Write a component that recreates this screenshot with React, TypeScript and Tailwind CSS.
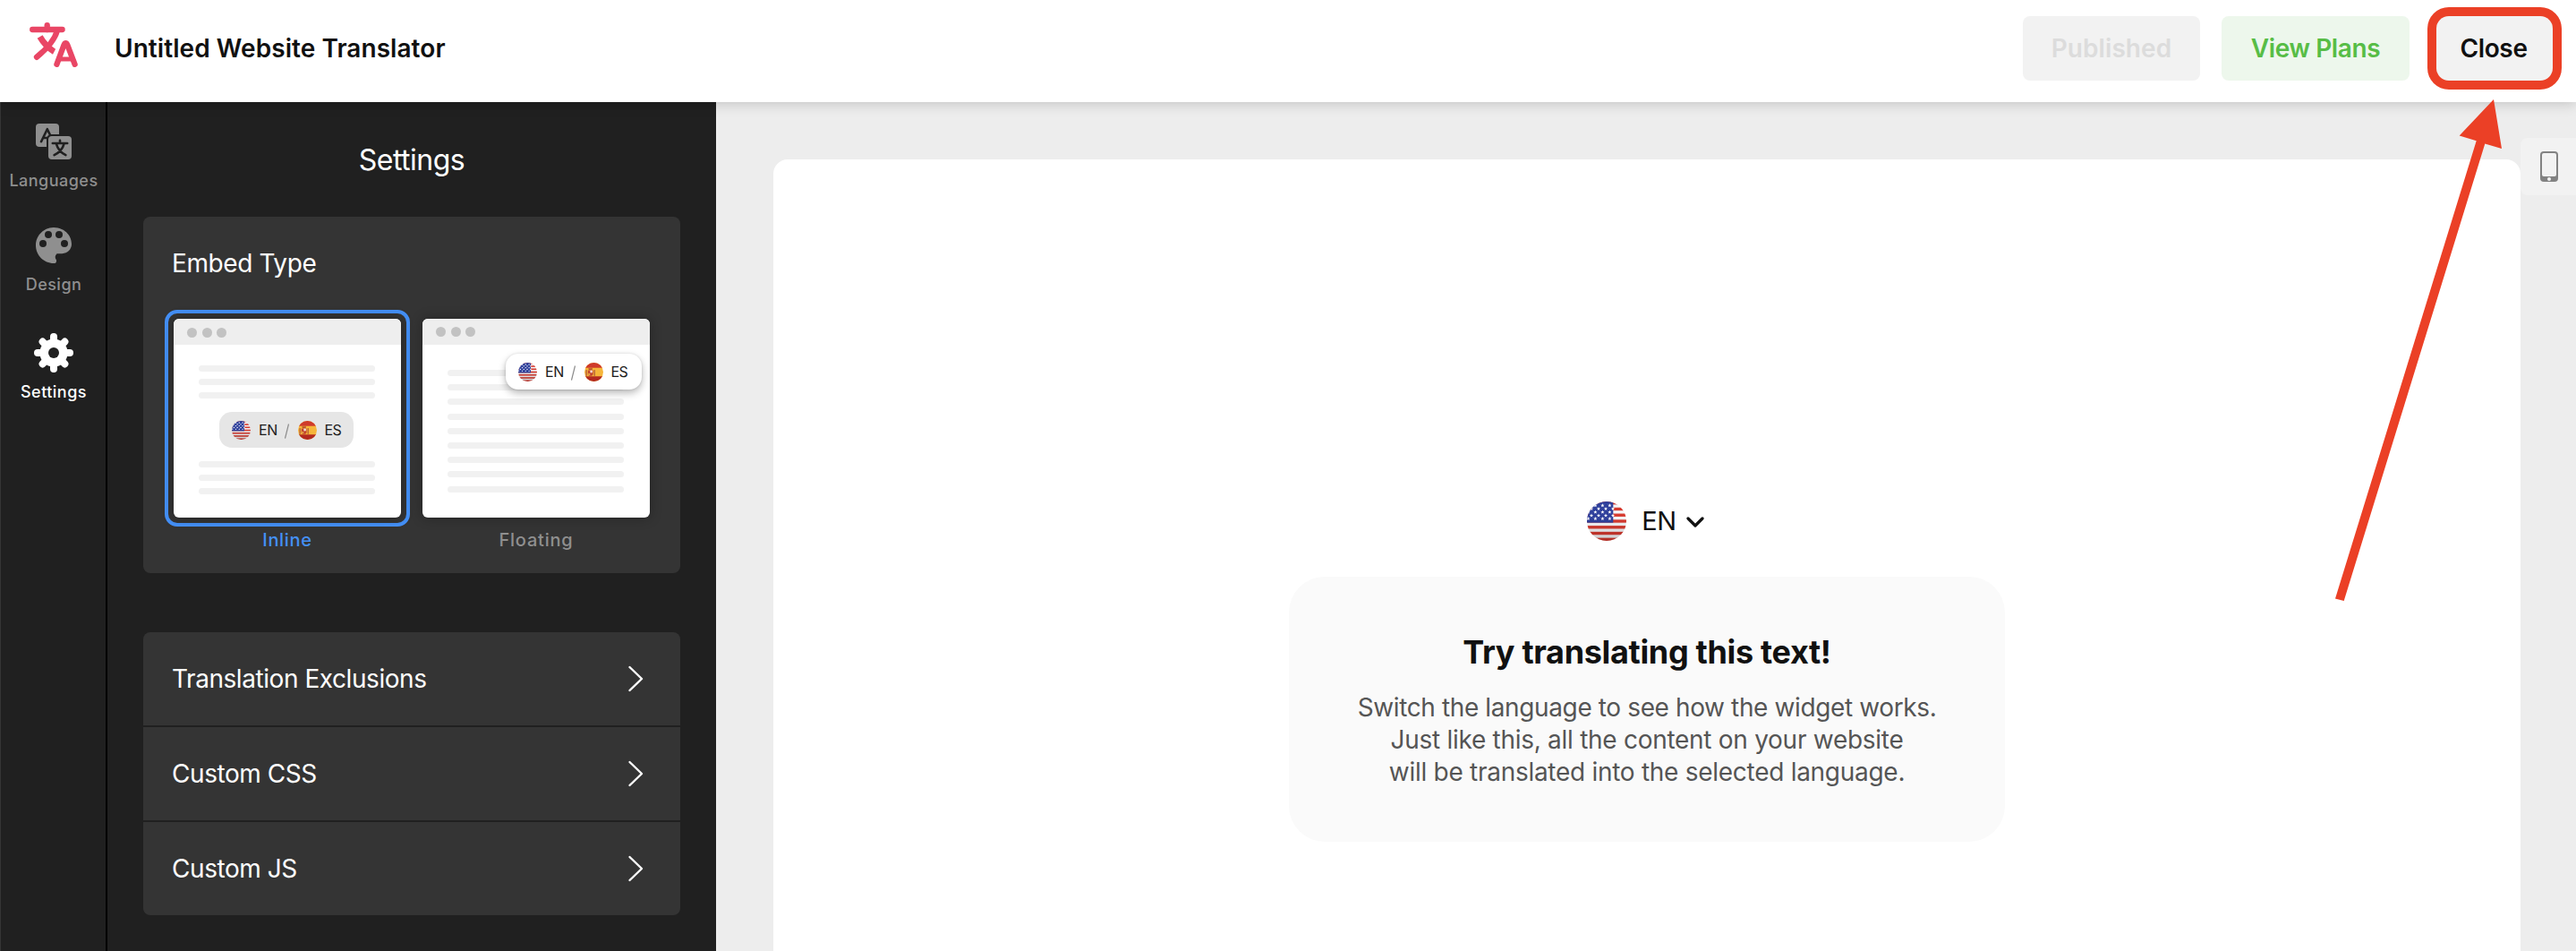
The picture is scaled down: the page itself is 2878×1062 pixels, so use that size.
import type { ReactNode } from "react";

function LogoIcon() {
  return (
    <svg width="54" height="50" viewBox="0 0 54 50" fill="none" stroke="#e94665" strokeWidth="6.3" strokeLinecap="round" strokeLinejoin="round">
      <path d="M3.2 8H36.6" />
      <path d="M19.7 3.2V8" />
      <path d="M31 9C28 20 20 29 8 38.8" />
      <path d="M11.6 16C15 22 20 28 28.5 33.5" strokeLinecap="butt" strokeWidth="6.8" />
      <path d="M33 22.5L24.5 38.5L30 40L37 27Z" fill="white" stroke="none" />
      <path d="M30.4 46.8L38.6 24.9Q40.4 21.6 42.2 24.9L50.6 46.8" />
      <path d="M34 41H48" strokeWidth="5" strokeLinecap="butt" />
    </svg>
  );
}

function LanguagesIcon() {
  return (
    <svg width="40" height="40" viewBox="0 0 40 40" fill="none" strokeLinecap="round" strokeLinejoin="round">
      <rect width="26" height="26" rx="4" fill="#8f8f8f" />
      <path d="M6 20.2L12.8 6.2L18.6 18M9 16H17" stroke="#202020" strokeWidth="2.6" />
      <rect x="12" y="12" width="30" height="30" rx="5.5" fill="#202020" />
      <rect x="14" y="14" width="26" height="26" rx="4" fill="#8f8f8f" />
      <path d="M27 18.8V22M18.8 22H35.2M31.6 22.4C30 28.5 26 32.5 20.6 35.2M22.8 22.4C24.5 28.5 28 32.5 33.4 35.2" stroke="#202020" strokeWidth="2.6" />
    </svg>
  );
}

function PaletteIcon() {
  return (
    <svg width="40" height="40" viewBox="0 0 40 40" fill="#8f8f8f">
      <path d="M20 0C9 0 0 9 0 20S9 40 20 40H21.4C22.8 39.4 23.4 37.6 22.9 36.2C21.2 34 21.2 31.2 23.6 29.2H29.5C35.4 29 40 24.5 40 18.6C40 8 31 0 20 0Z" />
      <g fill="#202020">
        <circle cx="8" cy="18" r="4" />
        <circle cx="14" cy="8" r="4" />
        <circle cx="26" cy="8" r="4" />
        <circle cx="32" cy="18" r="4" />
      </g>
    </svg>
  );
}

function GearIcon() {
  return (
    <svg width="44" height="44" viewBox="0 0 44 44">
      <circle cx="22" cy="22" r="15.6" fill="white" />
      <g stroke="white" strokeWidth="8" strokeLinecap="round">
        <path d="M22 4V40" />
        <path d="M4 22H40" />
        <path d="M9.6 9.6L34.4 34.4" />
        <path d="M34.4 9.6L9.6 34.4" />
      </g>
      <circle cx="22" cy="22" r="6" fill="#202020" />
    </svg>
  );
}

function PhoneIcon() {
  return (
    <svg width="20" height="34" viewBox="0 0 20 34">
      <rect width="20" height="34" rx="4" fill="#828282" />
      <rect x="2" y="2" width="16" height="26" rx="2" fill="#f2f2f2" />
      <circle cx="10" cy="31" r="2" fill="#f2f2f2" />
    </svg>
  );
}

const starRows = [4.5, 8.2, 11.9, 15.6, 19.3];

function UsFlag({ size, id }: { size: number; id: string }) {
  return (
    <svg width={size} height={size} viewBox="0 0 44 44" className="shrink-0">
      <defs>
        <clipPath id={id}>
          <circle cx="22" cy="22" r="22" />
        </clipPath>
        <linearGradient id={`${id}-shade`} x1="0" y1="0" x2="0" y2="1">
          <stop offset="0.4" stopColor="black" stopOpacity="0" />
          <stop offset="1" stopColor="black" stopOpacity="0.17" />
        </linearGradient>
      </defs>
      <g clipPath={`url(#${id})`}>
        <rect width="44" height="44" fill="#f5f5f7" />
        {[0, 2, 4, 6, 8, 10, 12].map((n) => (
          <rect key={n} y={n * 3.385} width="44" height="3.385" fill="#d63a2f" />
        ))}
        <rect width="29.3" height="23.7" fill="#2f409c" />
        {starRows.map((y, row) =>
          [0, 1, 2, 3].map((col) => (
            <path
              key={`${row}-${col}`}
              transform={`translate(${(row % 2 ? 5 : 1.4) + col * 8} ${y})`}
              d="M0 -2.2L0.6 -0.7L2.1 -0.7L0.9 0.3L1.3 1.8L0 0.9L-1.3 1.8L-0.9 0.3L-2.1 -0.7L-0.6 -0.7Z"
              fill="white"
            />
          ))
        )}
        <rect width="44" height="44" fill={`url(#${id}-shade)`} />
      </g>
    </svg>
  );
}

function EsFlag({ size, id }: { size: number; id: string }) {
  return (
    <svg width={size} height={size} viewBox="0 0 44 44" className="ml-[10px] shrink-0">
      <defs>
        <clipPath id={id}>
          <circle cx="22" cy="22" r="22" />
        </clipPath>
      </defs>
      <g clipPath={`url(#${id})`}>
        <rect width="44" height="44" fill="#f6b63a" />
        <rect width="44" height="12" fill="#cf3a2b" />
        <rect y="32" width="44" height="12" fill="#b32a20" />
        <rect x="3" y="17" width="3" height="14" fill="#b9653a" />
        <rect x="22" y="17" width="3" height="14" fill="#b9653a" />
        <path d="M8 18H20V26Q20 31 14 31T8 26Z" fill="#c2452f" />
        <path d="M9 13H19L18 17H10Z" fill="#b5532a" />
        <circle cx="16" cy="21" r="3" fill="#f3dcd8" />
        <rect x="9" y="25" width="4" height="4" fill="#e9b04a" />
      </g>
    </svg>
  );
}

function SidebarItem({ icon, label, active }: { icon: ReactNode; label: string; active?: boolean }) {
  return (
    <div className="flex flex-col items-center">
      <div className="flex h-11 items-center">{icon}</div>
      <span className={`mt-[10px] text-[18px] leading-6 font-medium tracking-[0.48px] ${active ? "text-white" : "text-[#8f8f8f]"}`}>
        {label}
      </span>
    </div>
  );
}

function LanguagePair({ id }: { id: string }) {
  return (
    <>
      <UsFlag size={21} id={`${id}-us`} />
      <span className="ml-[9px] w-5 text-[16px] tracking-[-0.4px]">EN</span>
      <svg width="5" height="17" viewBox="0 0 5 17" className="mt-[3px] ml-[9px] shrink-0">
        <path d="M4.5 0.5L0.5 16.5" stroke="#8a8a8a" strokeWidth="1.2" />
      </svg>
      <EsFlag size={21} id={`${id}-es`} />
      <span className="ml-[8.5px] text-[16px] tracking-[-0.6px]">ES</span>
    </>
  );
}

function Dots() {
  return (
    <>
      {[0, 1, 2].map((n) => (
        <span key={n} className="size-[11px] rounded-full bg-[#c2c2c2]" />
      ))}
    </>
  );
}

function Lines({ count }: { count: number }) {
  return (
    <>
      {Array.from({ length: count }, (_, n) => (
        <span key={n} className="block h-[7px] w-[197px] rounded-full bg-[#f1f1f1]" />
      ))}
    </>
  );
}

function InlinePreview() {
  return (
    <div className="h-[222px] w-[254px] overflow-hidden rounded-md bg-white shadow-[0_0_14px_rgba(0,0,0,0.3)]">
      <div className="flex h-[29px] items-center gap-[5.5px] bg-[#eeeeee] pt-[2px] pl-[15px]">
        <Dots />
      </div>
      <div className="flex flex-col gap-2 pt-[23px] pl-7">
        <Lines count={3} />
      </div>
      <div className="mt-[15px] ml-[51px] flex h-10 w-[150px] items-center rounded-[14px] bg-[#e6e6e6] pl-[14px] text-[#1c1c1c]">
        <LanguagePair id="inline" />
      </div>
      <div className="flex flex-col gap-2 pt-[15px] pl-7">
        <Lines count={3} />
      </div>
    </div>
  );
}

function FloatingPreview() {
  return (
    <div className="relative h-[222px] w-[254px] overflow-hidden rounded-md bg-white shadow-[0_0_14px_rgba(0,0,0,0.3)]">
      <div className="flex h-[29px] items-center gap-[5.5px] bg-[#eeeeee] pl-[15px]">
        <Dots />
      </div>
      <div className="flex flex-col gap-[9.2px] pt-[28px] pl-7">
        <Lines count={9} />
      </div>
      <div className="absolute top-[39px] right-[9px] flex h-10 w-[152px] items-center rounded-[14px] bg-white pl-[14px] text-[#1c1c1c] shadow-[0_4px_8px_rgba(0,0,0,0.28),0_0_3px_rgba(0,0,0,0.12)]">
        <LanguagePair id="floating" />
      </div>
    </div>
  );
}

const links = [
  { label: "Translation Exclusions", className: "rounded-t-lg" },
  { label: "Custom CSS", className: "" },
  { label: "Custom JS", className: "rounded-b-lg" },
];

function Header() {
  return (
    <header className="relative z-10 flex h-[114px] shrink-0 items-center justify-between bg-white pr-[26px] pb-1.5 pl-[33px] text-[28px] font-semibold shadow-[0_2px_14px_rgba(0,0,0,0.18)]">
      <div className="flex items-center">
        <div className="-mt-2">
          <LogoIcon />
        </div>
        <h1 className="ml-[41px] tracking-[0.06px] text-[#111111]">Untitled Website Translator</h1>
      </div>
      <div className="flex items-center">
        <button className="h-[72px] w-[198px] rounded-lg bg-[#f2f2f2] tracking-[0.07px] text-[#dcdcdc]">Published</button>
        <button className="ml-6 h-[72px] w-[210px] rounded-lg bg-[#edf7ec] tracking-[-0.39px] text-[#57bd46]">View Plans</button>
        <button className="ml-[30px] h-[72px] w-[130px] rounded-[14px] bg-[#f2f2f2] pr-[2px] tracking-[-0.35px] text-[#111111] shadow-[0_0_0_10px_#eb4026]">
          Close
        </button>
      </div>
    </header>
  );
}

export default function App() {
  return (
    <div className="relative flex h-[1062px] w-[2878px] flex-col overflow-hidden bg-[#ededed] font-['Inter',sans-serif]">
      <Header />

      <div className="flex min-h-0 flex-1">
        {/* Navigation */}
        <nav className="flex w-[120px] shrink-0 flex-col items-center border-r-2 border-l border-r-black border-l-[#353535] bg-[#202020] pt-[22px] pl-px">
          <SidebarItem icon={<LanguagesIcon />} label="Languages" />
          <div className="h-[38px]" />
          <SidebarItem icon={<PaletteIcon />} label="Design" />
          <div className="h-[42px]" />
          <SidebarItem icon={<GearIcon />} label="Settings" active />
        </nav>

        {/* Settings panel */}
        <aside className="w-[680px] shrink-0 bg-[#202020] px-10 text-white">
          <h2 className="pt-[45px] text-center text-[32px] leading-10 tracking-[-0.5px]">Settings</h2>

          <section className="mt-[43px] h-[398px] rounded-lg bg-[#343434] px-6 pt-[34px]">
            <h3 className="pl-2 text-[28px] leading-9 tracking-[-0.4px]">Embed Type</h3>
            <div className="mt-[34px] flex gap-1">
              <div className="flex flex-col items-center">
                <div className="rounded-[14px] border-4 border-[#4490f7] p-1.5">
                  <InlinePreview />
                </div>
                <span className="mt-[3px] text-[20px] leading-6 font-medium tracking-[0.68px] text-[#4490f7]">Inline</span>
              </div>
              <div className="flex flex-col items-center">
                <div className="p-2.5">
                  <FloatingPreview />
                </div>
                <span className="mt-[3px] text-[20px] leading-6 font-medium tracking-[0.8px] text-[#8f8f8f]">Floating</span>
              </div>
            </div>
          </section>

          <div className="mt-[66px] flex flex-col gap-0.5">
            {links.map((link) => (
              <div key={link.label} className={`flex h-[104px] items-center justify-between bg-[#343434] pr-[41px] pl-8 text-[28px] tracking-[-0.44px] ${link.className}`}>
                {link.label}
                <svg width="18" height="30" viewBox="0 0 18 30" fill="none" stroke="white" strokeWidth="2.4" strokeLinecap="round" strokeLinejoin="round">
                  <path d="M2.5 2L16 15L2.5 28" />
                </svg>
              </div>
            ))}
          </div>
        </aside>

        {/* Preview canvas */}
        <main className="flex flex-1 items-start pt-10 pl-16">
          <div className="mt-6 flex h-[900px] w-[1952px] flex-col items-center rounded-t-2xl bg-white pt-[382px]">
            <div className="flex h-11 items-center pr-[3px]">
              <UsFlag size={44} id="current-us" />
              <span className="ml-[17px] text-[29px] tracking-[-0.5px] text-[#111111]">EN</span>
              <svg width="20" height="14" viewBox="0 0 20 14" fill="none" stroke="#111111" strokeWidth="3.2" strokeLinecap="round" strokeLinejoin="round" className="mt-[2px] ml-[11px]">
                <path d="M2 3L10 11L18 3" />
              </svg>
            </div>
            <div className="mt-10 h-[296px] w-[800px] rounded-[40px] bg-[#fafafa] pt-[62px] text-center">
              <h2 className="text-[36px] leading-[44px] font-bold tracking-[-0.33px] text-[#111111]">Try translating this text!</h2>
              <p className="mt-[22px] text-[28px] leading-9 text-[#555555]">
                <span className="block tracking-[-0.38px]">Switch the language to see how the widget works.</span>
                <span className="block tracking-[-0.28px]">Just like this, all the content on your website</span>
                <span className="block tracking-[-0.28px]">will be translated into the selected language.</span>
              </p>
            </div>
          </div>
          <div className="flex h-16 w-[62px] items-center rounded-l-lg bg-[#f2f2f2] pl-[22px]">
            <PhoneIcon />
          </div>
        </main>
      </div>

      {/* Pointer to the Close button */}
      <svg width="200" height="570" viewBox="2600 106 200 570" className="absolute top-[106px] left-[2600px] z-20" fill="#eb4026">
        <path d="M2786 111L2795 166L2776.3 160.6L2618.7 671L2609 668.5L2766.7 157.3L2747.7 151.5Z" />
      </svg>
    </div>
  );
}
